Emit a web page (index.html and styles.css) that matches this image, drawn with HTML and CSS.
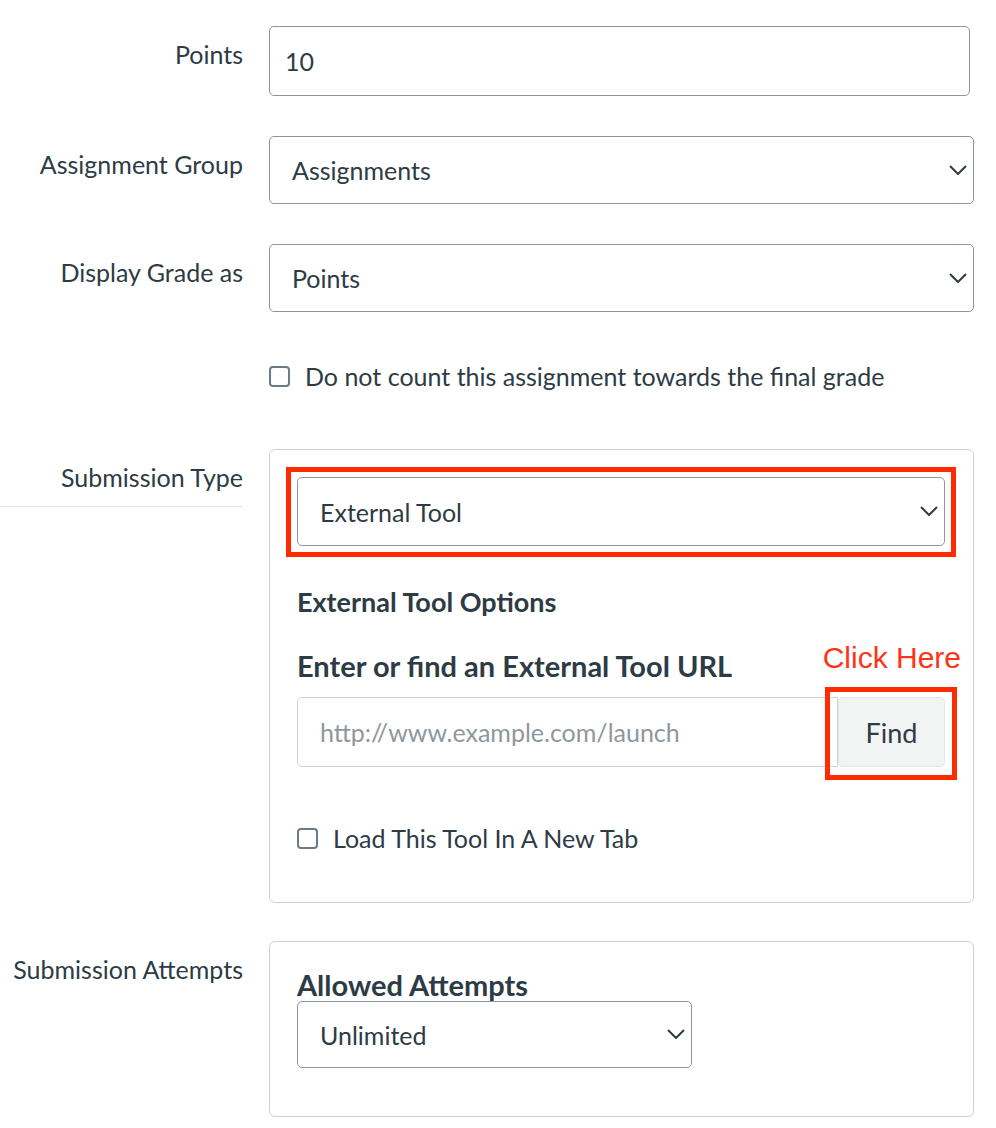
FILE: index.html
```html
<!DOCTYPE html>
<html>
<head>
<meta charset='utf-8'/>
<title>Assignment settings</title>
<link rel="stylesheet" href="styles.css">
</head>
<body>
<div class='form'>

<div class='row row-points'>
<label class='row-label' for='points'>Points</label>
<div class='row-control'>
<input id='points' class='text-input points-input' type='text' value='10'/>
</div>
</div>

<div class='row'>
<label class='row-label' for='group'>Assignment Group</label>
<div class='row-control'>
<div class='select-wrap'>
<select id='group' class='select'><option>Assignments</option></select>
<svg class='chevron' width='18' height='10' viewBox='0 0 18 10'><path d='M1 1 L9 9 L17 1' fill='none' stroke='#2D3B45' stroke-width='2'/></svg>
</div>
</div>
</div>

<div class='row row-grade'>
<label class='row-label' for='grade'>Display Grade as</label>
<div class='row-control'>
<div class='select-wrap'>
<select id='grade' class='select'><option>Points</option></select>
<svg class='chevron' width='18' height='10' viewBox='0 0 18 10'><path d='M1 1 L9 9 L17 1' fill='none' stroke='#2D3B45' stroke-width='2'/></svg>
</div>
</div>
</div>

<div class='row row-omit'>
<div class='row-label'></div>
<div class='row-control'>
<label class='check'><input type='checkbox'/><span>Do not count this assignment towards the final grade</span></label>
</div>
</div>

<div class='row row-submission'>
<div class='row-label row-label-divided'>Submission Type</div>
<div class='row-control'>
<div class='panel'>
<div class='select-wrap'>
<select class='select'><option>External Tool</option></select>
<svg class='chevron' width='18' height='10' viewBox='0 0 18 10'><path d='M1 1 L9 9 L17 1' fill='none' stroke='#2D3B45' stroke-width='2'/></svg>
<span class='callout callout-select'></span>
</div>
<h3 class='panel-title'>External Tool Options</h3>
<h4 class='field-title'>Enter or find an External Tool URL</h4>
<div class='url-group'>
<input class='text-input url-input' type='text' placeholder='http://www.example.com/launch'/>
<div class='find-wrap'>
<button class='find-button'>Find</button>
<span class='callout callout-find'></span>
</div>
<span class='callout-note'>Click Here</span>
</div>
<label class='check check-tab'><input type='checkbox'/><span>Load This Tool In A New Tab</span></label>
</div>
</div>
</div>

<div class='row'>
<div class='row-label'>Submission Attempts</div>
<div class='row-control'>
<div class='panel panel-attempts'>
<h4 class='field-title'>Allowed Attempts</h4>
<div class='select-wrap select-short'>
<select class='select'><option>Unlimited</option></select>
<svg class='chevron' width='18' height='10' viewBox='0 0 18 10'><path d='M1 1 L9 9 L17 1' fill='none' stroke='#2D3B45' stroke-width='2'/></svg>
</div>
</div>
</div>
</div>

</div>
</body>
</html>
```

FILE: styles.css
```css
body {
    margin: 0;
    background: #fff;
    color: #2D3B45;
    font-family: Lato, "Noto Sans", sans-serif;
    font-size: 25px;
}
.form {
    padding-top: 26px;
}
.row {
    display: grid;
    grid-template-columns: 243px 705px;
    column-gap: 26px;
    margin-bottom: 40px;
}
.row-grade {
    margin-bottom: 46px;
}
.row-omit {
    margin-bottom: 55px;
}
.row-submission {
    margin-bottom: 38px;
}
.row-label {
    padding-top: 10px;
    line-height: 36px;
    text-align: right;
    align-self: start;
}
.row-label-divided {
    padding-bottom: 11px;
    border-bottom: 1px solid #E2E5E8;
}
.text-input {
    box-sizing: border-box;
    height: 70px;
    padding: 0 15px;
    border: 1px solid #8D959F;
    border-radius: 5px;
    font-family: inherit;
    font-size: 25px;
    color: #2D3B45;
    background: #fff;
}
.points-input {
    width: 701px;
}
.select-wrap {
    position: relative;
}
.select {
    box-sizing: border-box;
    display: block;
    width: 100%;
    height: 68px;
    padding: 0 40px 0 22px;
    border: 1px solid #8D959F;
    border-radius: 5px;
    background: #fff;
    color: #2D3B45;
    font-family: inherit;
    font-size: 25px;
    appearance: none;
    -webkit-appearance: none;
}
.chevron {
    position: absolute;
    right: 7px;
    top: 29px;
    pointer-events: none;
}
.select-short {
    width: 395px;
}
.check {
    display: flex;
    align-items: center;
    line-height: 36px;
}
.check input {
    box-sizing: border-box;
    width: 21px;
    height: 21px;
    margin: 0 15px 0 0;
    border: 2px solid #6F7B84;
    border-radius: 4px;
    background: #fff;
    appearance: none;
    -webkit-appearance: none;
}
.panel {
    box-sizing: border-box;
    width: 705px;
    padding: 27px 28px 46px 27px;
    border: 1px solid #CDD2D6;
    border-radius: 6px;
}
.panel .select {
    height: 69px;
}
.panel-title {
    margin: 38px 0 0 0;
    font-size: 27px;
    line-height: 36px;
    font-weight: 700;
}
.field-title {
    margin: 29px 0 14px 0;
    font-size: 29px;
    line-height: 34px;
    font-weight: 700;
}
.url-group {
    position: relative;
    display: flex;
}
.url-input {
    flex: 1;
    padding-left: 22px;
    border-color: #CDD2D6;
    border-radius: 5px 0 0 5px;
}
.url-input::placeholder {
    color: #8F979E;
}
.find-wrap {
    position: relative;
}
.find-button {
    box-sizing: border-box;
    width: 107px;
    height: 70px;
    border: 1px solid #E4E7E9;
    border-radius: 5px;
    background: #F2F4F4;
    color: #2D3B45;
    font-family: inherit;
    font-size: 27px;
}
.check-tab {
    margin-top: 53px;
}
.panel-attempts {
    padding-top: 26px;
    padding-bottom: 48px;
}
.panel-attempts .field-title {
    margin: 0;
    line-height: 33px;
}
.panel-attempts .select {
    height: 67px;
}
.panel-attempts .chevron {
    top: 28px;
}
.callout {
    position: absolute;
    border: 5px solid #FF2A00;
    pointer-events: none;
}
.callout-select {
    top: -10px;
    left: -11px;
    right: -11px;
    bottom: -11px;
}
.callout-find {
    top: -10px;
    left: -13px;
    right: -12px;
    bottom: -13px;
}
.callout-note {
    position: absolute;
    right: -16px;
    top: -54px;
    font-family: "Liberation Sans", Arial, sans-serif;
    font-size: 30px;
    line-height: 30px;
    color: #FF3318;
}
```
